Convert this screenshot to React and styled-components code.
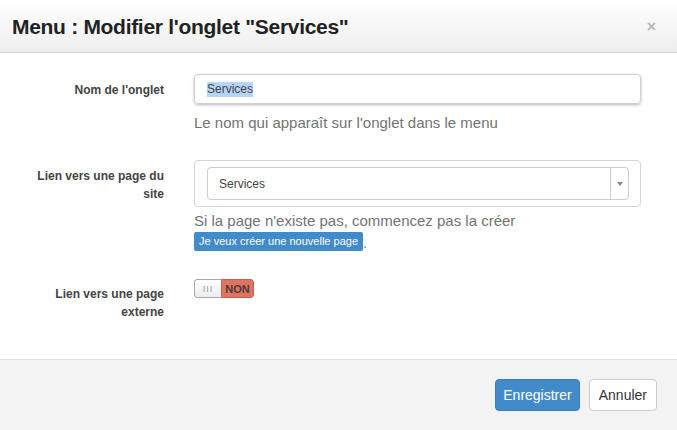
import React from 'react';
import styled, { createGlobalStyle } from 'styled-components';

const GlobalStyle = createGlobalStyle`
  html, body {
    margin: 0;
    padding: 0;
    background: #ffffff;
  }
  body {
    font-family: "Liberation Sans", Arial, sans-serif;
    color: #333;
  }
`;

export const Modal = styled.div`
  width: 677px;
  height: 430px;
  display: flex;
  flex-direction: column;
  background: #fff;
  overflow: hidden;
`;

export const Header = styled.header`
  height: 52px;
  display: flex;
  align-items: center;
  justify-content: space-between;
  padding: 0 21px 0 12px;
  background: linear-gradient(to bottom, #ffffff 0%, #eeeeee 100%);
  border-bottom: 1px solid #d6d6d6;
`;

export const Title = styled.h1`
  margin: 0;
  font-size: 21px;
  font-weight: bold;
  letter-spacing: -0.3px;
  color: #222;
  padding-top: 1px;
`;

export const Close = styled.span`
  font-size: 16px;
  font-weight: bold;
  color: #b8b8b8;
  padding-top: 1px;
`;

export const Body = styled.div`
  flex: 1;
  padding: 21px 0 0 12px;
  display: flex;
  flex-direction: column;
`;

export const Row = styled.div`
  display: grid;
  grid-template-columns: 152px 447px;
  column-gap: 30px;
  margin-top: ${(p) => p.$top || 0}px;
`;

export const Label = styled.label`
  text-align: right;
  font-size: 12px;
  font-weight: bold;
  line-height: 18px;
  color: #444;
  padding-top: ${(p) => p.$pad || 7}px;
`;

export const Field = styled.div`
  display: flex;
  flex-direction: column;
  align-items: flex-start;
`;

export const TextInput = styled.div`
  box-sizing: border-box;
  width: 447px;
  height: 30px;
  border: 1px solid #cfcfcf;
  border-radius: 4px;
  box-shadow: 0 1px 3px rgba(0, 0, 0, 0.28);
  display: flex;
  align-items: center;
  padding-left: 12px;
  font-size: 12px;
  color: #444;
`;

export const Selected = styled.span`
  background: #b5d5fd;
  line-height: 15px;
`;

export const Help = styled.p`
  margin: 0;
  font-size: 15px;
  line-height: 20px;
  color: #737373;
  margin-top: ${(p) => p.$top || 0}px;
`;

export const SelectWrap = styled.div`
  box-sizing: border-box;
  width: 447px;
  padding: 6px 11px 6px 12px;
  border: 1px solid #d4d4d4;
  border-radius: 4px;
`;

export const Select = styled.div`
  box-sizing: border-box;
  height: 33px;
  display: flex;
  align-items: stretch;
  border: 1px solid #cccccc;
  border-radius: 4px;
  font-size: 12px;
  color: #444;
`;

export const SelectValue = styled.div`
  flex: 1;
  display: flex;
  align-items: center;
  padding-left: 11px;
`;

export const Caret = styled.div`
  width: 17px;
  border-left: 1px solid #cccccc;
  display: flex;
  align-items: center;
  justify-content: center;
  &::after {
    content: '';
    border-left: 3px solid transparent;
    border-right: 3px solid transparent;
    border-top: 4px solid #888;
  }
`;

export const LinkLine = styled.div`
  display: flex;
  align-items: flex-end;
  font-size: 15px;
  color: #737373;
  margin-top: 1px;
`;

export const Pill = styled.span`
  display: inline-block;
  height: 19px;
  line-height: 19px;
  padding: 0 5px;
  background: #428bca;
  color: #fff;
  font-size: 11px;
  border-radius: 2px;
`;

export const Switch = styled.div`
  display: flex;
  height: 19px;
  width: 60px;
  border-radius: 3px;
  overflow: hidden;
  box-sizing: border-box;
`;

export const SwitchHandle = styled.span`
  box-sizing: border-box;
  width: 27px;
  border: 1px solid #a8a8a8;
  border-right: none;
  border-radius: 3px 0 0 3px;
  background: linear-gradient(to bottom, #ffffff, #ededed);
  color: #999;
  font-size: 9px;
  letter-spacing: 1px;
  display: flex;
  align-items: center;
  justify-content: center;
`;

export const SwitchState = styled.span`
  box-sizing: border-box;
  flex: 1;
  background: ${(p) => (p.$on ? '#5cb85c' : '#dd7562')};
  border: 1px solid #c8614f;
  border-radius: 0 3px 3px 0;
  color: #4e3a36;
  font-size: 11px;
  font-weight: bold;
  display: flex;
  align-items: center;
  justify-content: center;
`;

export const Footer = styled.footer`
  height: 71px;
  box-sizing: border-box;
  border-top: 1px solid #e2e2e2;
  background: #f3f3f3;
  display: flex;
  justify-content: flex-end;
  align-items: flex-start;
  gap: 9px;
  padding: 19px 20px 0 0;
`;

export const Button = styled.button`
  height: 32px;
  box-sizing: border-box;
  padding: 0 ${(p) => (p.$primary ? 7 : 9)}px;
  border-radius: 4px;
  font-family: "Liberation Sans", Arial, sans-serif;
  font-size: 14px;
  border: 1px solid ${(p) => (p.$primary ? '#3a80bf' : '#cccccc')};
  background: ${(p) => (p.$primary ? '#428bca' : '#ffffff')};
  color: ${(p) => (p.$primary ? '#ffffff' : '#333333')};
`;

function App() {
  return (
    <>
      <GlobalStyle />
      <Modal>
        <Header>
          <Title>Menu : Modifier l'onglet "Services"</Title>
          <Close>×</Close>
        </Header>
        <Body>
          <Row>
            <Label>Nom de l'onglet</Label>
            <Field>
              <TextInput>
                <Selected>Services</Selected>
              </TextInput>
              <Help $top={9}>Le nom qui apparaît sur l'onglet dans le menu</Help>
            </Field>
          </Row>
          <Row $top={27}>
            <Label>
              Lien vers une page du
              <br />
              site
            </Label>
            <Field>
              <SelectWrap>
                <Select>
                  <SelectValue>Services</SelectValue>
                  <Caret />
                </Select>
              </SelectWrap>
              <Help $top={4}>Si la page n'existe pas, commencez pas la créer</Help>
              <LinkLine>
                <Pill>Je veux créer une nouvelle page</Pill>.
              </LinkLine>
            </Field>
          </Row>
          <Row $top={28}>
            <Label $pad={6}>
              Lien vers une page
              <br />
              externe
            </Label>
            <Field>
              <Switch>
                <SwitchHandle>III</SwitchHandle>
                <SwitchState>NON</SwitchState>
              </Switch>
            </Field>
          </Row>
        </Body>
        <Footer>
          <Button $primary>Enregistrer</Button>
          <Button>Annuler</Button>
        </Footer>
      </Modal>
    </>
  );
}

export default App;
